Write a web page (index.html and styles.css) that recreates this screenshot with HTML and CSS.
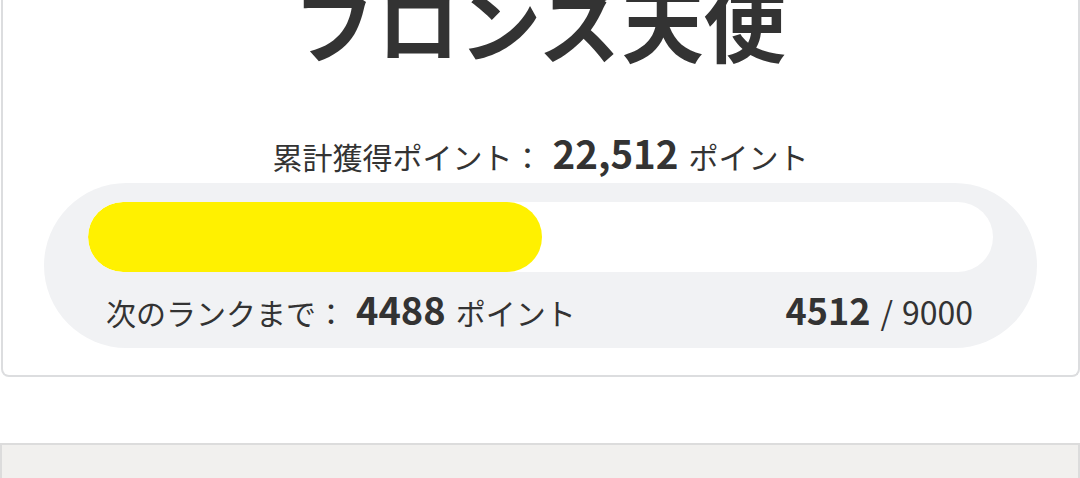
FILE: index.html
```html
<!DOCTYPE html>
<html lang="ja">
<head>
<meta charset="utf-8">
<link rel="stylesheet" href="styles.css">
</head>
<body>
<div class="page">
  <section class="rank-card">
    <h1 class="rank-title">ブロンズ天使</h1>
    <p class="total">累計獲得ポイント：<span class="total-num">22,512</span><span class="unit">ポイント</span></p>
    <div class="progress-panel">
      <div class="track">
        <div class="fill" style="width: 50.13%"></div>
      </div>
      <div class="progress-row">
        <div class="next">次のランクまで：<span class="big">4488</span><span class="unit">ポイント</span></div>
        <div class="ratio"><span class="big">4512</span><span class="slash">/</span><span class="max">9000</span></div>
      </div>
    </div>
  </section>
  <section class="next-box"></section>
</div>
</body>
</html>
```

FILE: styles.css
```css
html, body {
  margin: 0;
  padding: 0;
  background: #ffffff;
}

body {
  font-family: "Noto Sans CJK JP", "Noto Sans", sans-serif;
  color: #333333;
}

.page {
  display: flex;
  flex-direction: column;
  padding: 0 0 0 1px;
}

.rank-card {
  display: flow-root;
  border: 2px solid #dcdddf;
  border-top: none;
  border-radius: 0 0 8px 8px;
  padding: 0 41px 27px;
}

.rank-title {
  margin: -20px 0 0;
  font-size: 82px;
  line-height: 82px;
  font-weight: 700;
  text-align: center;
  color: #333333;
}

.total {
  margin: 70px 0 7px;
  font-size: 30px;
  line-height: 40px;
  text-align: center;
  white-space: nowrap;
}

.total-num {
  font-size: 38.5px;
  font-weight: 700;
  margin-left: 10px;
}

.unit {
  margin-left: 10px;
}

.progress-panel {
  background: #f1f2f4;
  border-radius: 83px;
  padding: 19px 44px 16px;
}

.track {
  height: 70px;
  background: #ffffff;
  border-radius: 35px;
  overflow: hidden;
}

.fill {
  height: 100%;
  background: #fff100;
  border-radius: 35px;
}

.progress-row {
  margin-top: 17px;
  padding: 0 20px 0 18px;
  display: flex;
  justify-content: space-between;
  align-items: baseline;
  font-size: 30px;
  line-height: 40px;
  white-space: nowrap;
}

.big {
  font-size: 38px;
  font-weight: 700;
  margin-left: 10px;
}

.ratio .big {
  font-size: 36px;
  margin-left: 0;
}

.slash {
  font-size: 32px;
  margin: 0 9px 0 10px;
}

.max {
  font-size: 32px;
}

.next-box {
  margin: 66px 0 0 -1px;
  height: 60px;
  background: #f1f0ee;
  border: 2px solid #dcdcdc;
  border-bottom: none;
}
```
